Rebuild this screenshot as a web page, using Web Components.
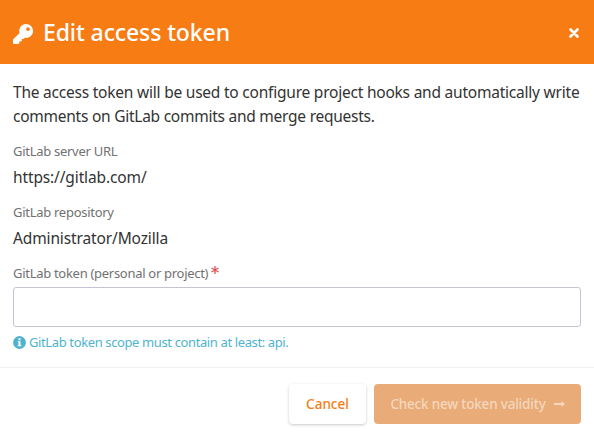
<!DOCTYPE html>
<html lang="en">
<head>
<meta charset="utf-8">
<title>Edit access token</title>
<style>
html, body { margin: 0; height: 100%; background: #fff; overflow: hidden; }
body { font-family: "Noto Sans", "Open Sans", sans-serif; font-size: 15.5px; line-height: 24px; color: #333; }
</style>
</head>
<body>
<token-modal></token-modal>
<script>
const define = (name, html) => customElements.define(name, class extends HTMLElement {
  constructor() {
    super();
    const template = document.createElement('template');
    template.innerHTML = html;
    this.attachShadow({ mode: 'open' }).appendChild(template.content.cloneNode(true));
  }
});

define('modal-header', `
<style>
:host { display: flex; align-items: center; height: 64px; box-sizing: border-box; padding: 0 13px; background: #f67c13; color: #fff; }
.key { width: 20px; height: 20px; margin: 3px 10px 0 0; flex: none; }
h1 { margin: 0; flex: 1; font-size: 23px; line-height: 32px; font-weight: 500; letter-spacing: -0.1px; white-space: nowrap; }
button { display: flex; border: 0; padding: 0; background: none; color: inherit; margin: 2px 2px 0 0; }
.close { width: 10px; height: 10px; }
</style>
<svg class="key" viewBox="0 0 512 512" fill="currentColor"><path d="M512 176c0 97.200-78.800 176-176 176-11.200 0-22.200-1.100-32.800-3.100l-24 27A24 24 0 0 1 261.200 384H224v40a24 24 0 0 1-24 24h-40v40a24 24 0 0 1-24 24H24a24 24 0 0 1-24-24v-78a24 24 0 0 1 7-17l161.800-161.800A176 176 0 0 1 160 176C160 78.800 238.800 0 336 0s176 78.500 176 176zM336 128a48 48 0 1 0 96 0 48 48 0 1 0-96 0z"/></svg>
<h1><slot></slot></h1>
<button aria-label="Close"><svg class="close" viewBox="0 0 10 10"><path d="M1.500 1.500l7 7m0-7l-7 7" stroke="currentColor" stroke-width="2.700" stroke-linecap="round"/></svg></button>`);

define('form-property', `
<style>
:host { display: block; margin-bottom: 13px; }
.label { font-size: 13px; line-height: 18px; color: #717171; margin-bottom: 5px; letter-spacing: -0.28px; }
.value { line-height: 25px; letter-spacing: -0.13px; }
</style>
<div class="label"><slot name="label"></slot></div>
<div class="value"><slot></slot></div>`);

define('token-field', `
<style>
:host { display: block; }
label { display: flex; height: 18px; font-size: 13px; line-height: 18px; color: #717171; letter-spacing: -0.29px; margin-bottom: 5px; }
.star { width: 8px; height: 8px; margin: 2px 0 0 3px; }
input { display: block; width: 100%; height: 40px; box-sizing: border-box; border: 1px solid #c4c4d5; border-radius: 3px; background: #fff; outline: none; padding: 0 12px; }
.help { display: flex; align-items: center; margin-top: 6px; font-size: 13px; line-height: 18px; color: #4fb3cf; letter-spacing: -0.38px; }
.info { width: 13px; height: 13px; margin-right: 3px; }
</style>
<label for="token"><span>GitLab token (personal or project)</span><svg class="star" viewBox="0 0 8 8"><path d="M4 0v8M.5 2l7 4M.5 6l7-4" stroke="#e04f57" stroke-width="1.250"/></svg></label>
<input id="token" type="password">
<div class="help"><svg class="info" viewBox="0 0 13 13"><circle cx="6.500" cy="6.500" r="6.400" fill="#4fb3cf"/><path d="M5.500 2.300h2v2h-2zM4.800 5.300h2.700v3.700h.8v1.300H4.800V9h.8V6.600h-.8z" fill="#fff"/></svg><span>GitLab token scope must contain at least: api.</span></div>`);

define('modal-button', `
<style>
:host { display: block; }
button { display: flex; align-items: center; justify-content: center; gap: 8px; box-sizing: border-box; width: 100%; height: 40px; padding: 0; border: 0; border-radius: 4px; background: #fff; color: #f67c13; font: 500 13.500px/20px "Noto Sans", sans-serif; white-space: nowrap; box-shadow: 0 1px 3px rgba(0,0,0,.22); }
:host([primary]) button { background: #e9ab77; color: #f5d7bd; box-shadow: none; letter-spacing: -0.2px; }
</style>
<button><slot></slot><slot name="icon"></slot></button>`);

define('token-modal', `
<style>
:host { display: flex; flex-direction: column; height: 437px; }
main { flex: none; height: 303px; box-sizing: border-box; padding: 16px 13px 0; }
p { margin: 0 0 14px; white-space: nowrap; }
.l1 { letter-spacing: -0.22px; } .l2 { letter-spacing: -0.25px; }
footer { display: flex; justify-content: flex-end; gap: 8px; padding: 16px 13px 0; border-top: 1px solid #f0f0f0; }
.cancel { width: 77px; } .check { width: 207px; }
.arrow { width: 11px; height: 8px; }
</style>
<modal-header>Edit access token</modal-header>
<main>
<p><span class="l1">The access token will be used to configure project hooks and automatically write</span><br><span class="l2">comments on GitLab commits and merge requests.</span></p>
<form-property><span slot="label">GitLab server URL</span><span>https://gitlab.com/</span></form-property>
<form-property><span slot="label">GitLab repository</span><span>Administrator/Mozilla</span></form-property>
<token-field></token-field>
</main>
<footer>
<modal-button class="cancel">Cancel</modal-button>
<modal-button class="check" primary>Check new token validity<svg slot="icon" class="arrow" viewBox="0 0 11 8"><path d="M0 3.100h7.500V1L11 4 7.500 7V4.900H0z" fill="currentColor"/></svg></modal-button>
</footer>`);
</script>
</body>
</html>
